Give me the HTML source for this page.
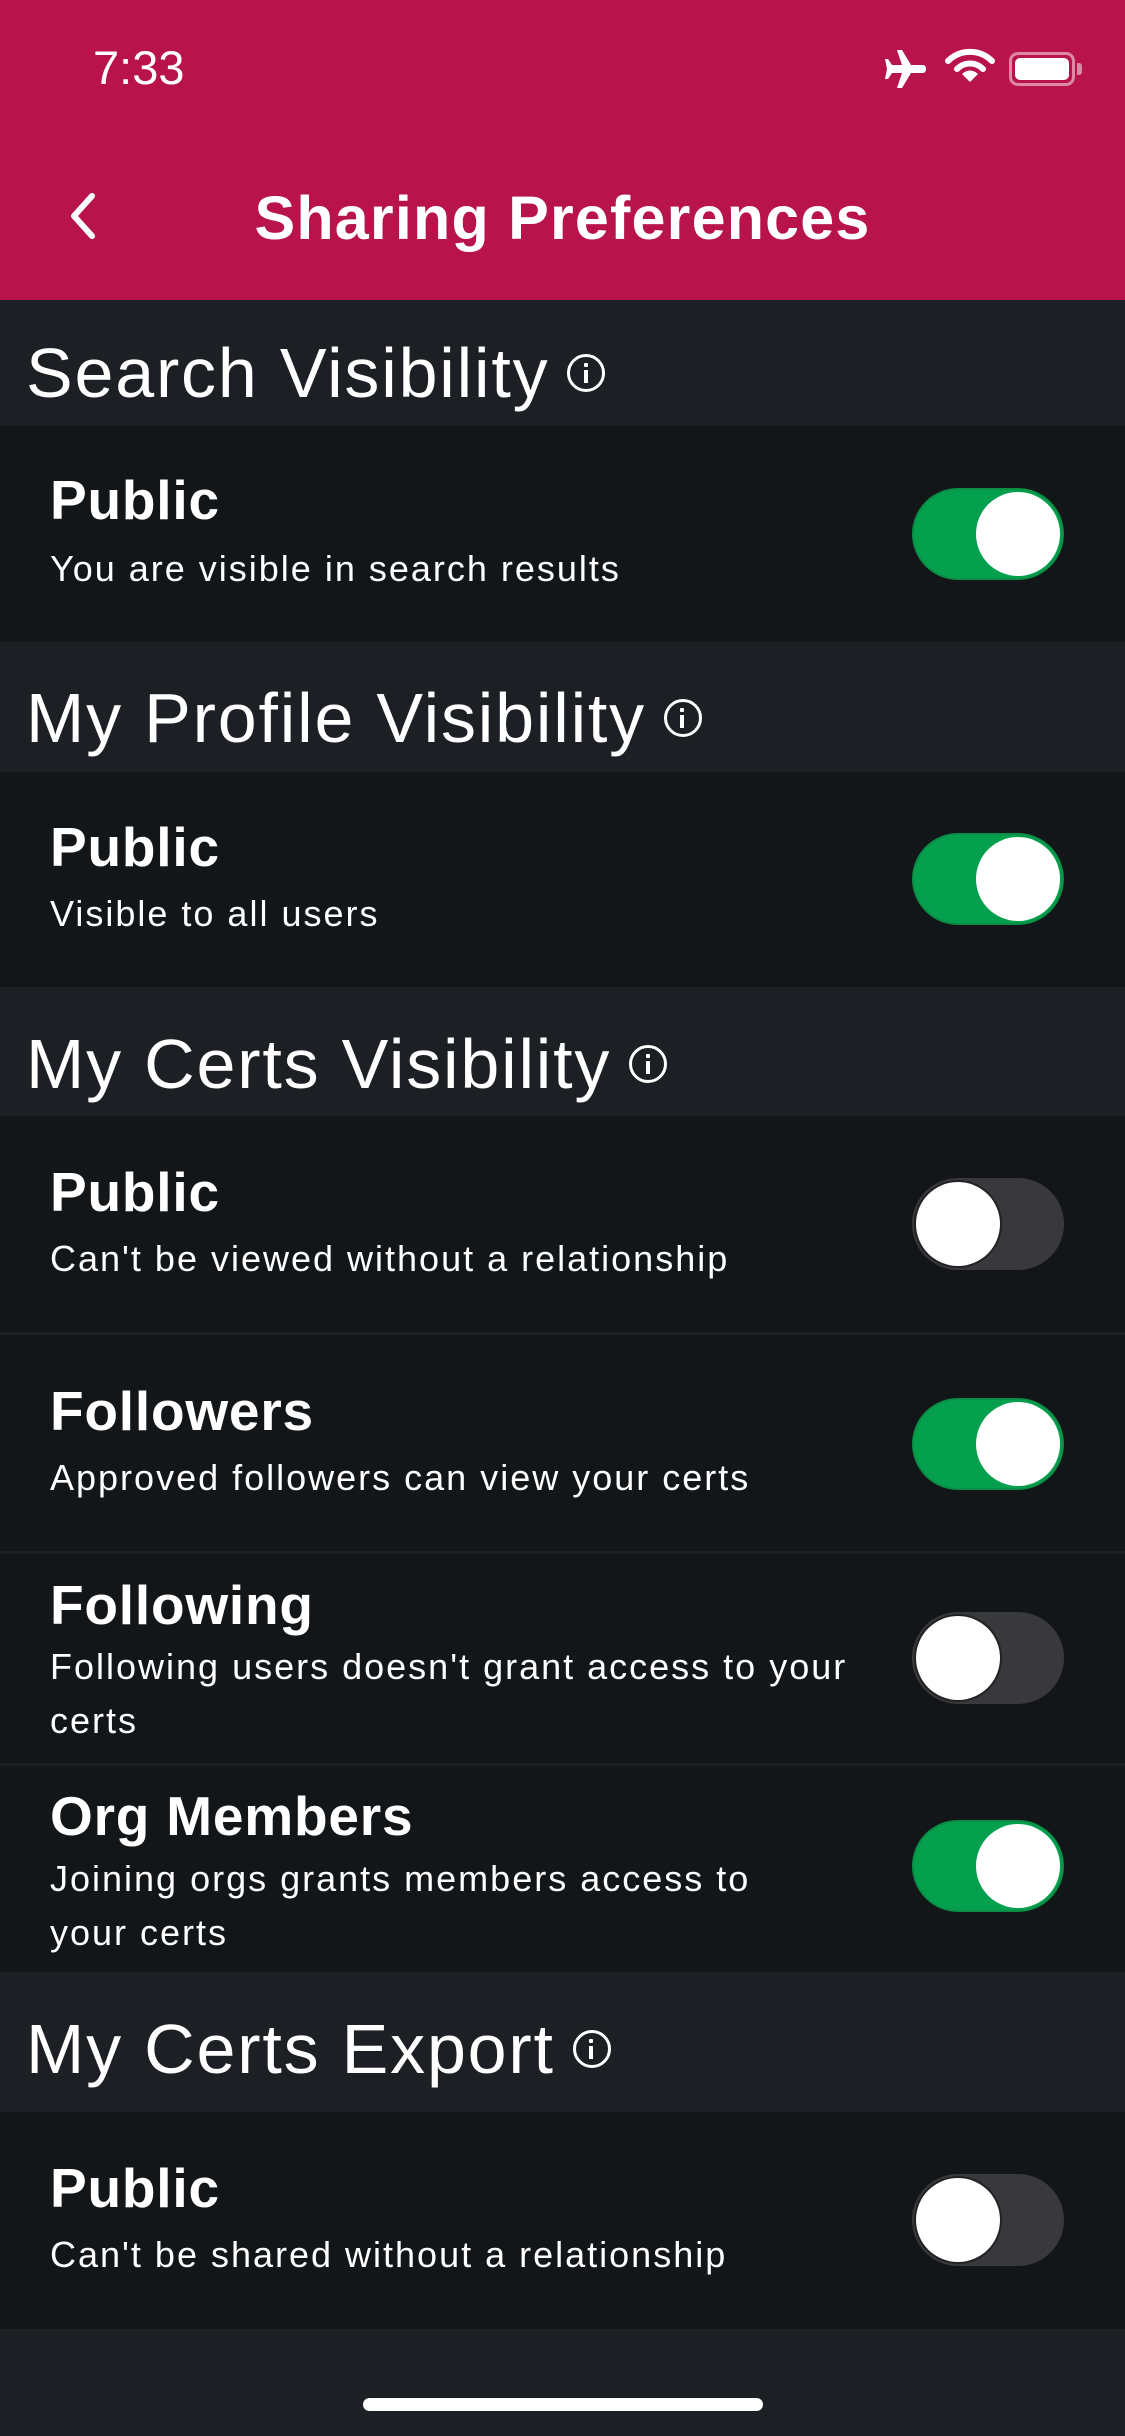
<!DOCTYPE html>
<html><head><meta charset="utf-8"><style>
*{margin:0;padding:0;box-sizing:border-box}
body{width:1125px;height:2436px;background:#1c1f23;position:relative;overflow:hidden;font-family:"Liberation Sans",sans-serif;color:#fff}
.abs{position:absolute}
.hdr{left:0;top:0;width:1125px;height:300px;background:#b8134a}
.row{left:0;width:1125px;background:#131619}
.sep{left:0;width:1125px;height:3px;background:#1c1f23}
.h{left:26px;font-size:70px;letter-spacing:1.8px;line-height:80px;white-space:nowrap;display:flex;align-items:center}
.h .i{display:inline-block;width:38px;height:38px;border:3.5px solid #fff;border-radius:50%;margin-left:18px;position:relative}
.h .i:before{content:"";position:absolute;left:13.5px;top:6px;width:4px;height:4px;background:#fff;border-radius:1px}
.h .i:after{content:"";position:absolute;left:13.5px;top:13px;width:4px;height:13px;background:#fff}
.t{left:50px;font-size:55px;font-weight:bold;letter-spacing:0.8px;line-height:60px;white-space:nowrap}
.s{left:50px;font-size:36px;letter-spacing:2px;line-height:54px;white-space:nowrap}
.tg{left:912px;width:152px;height:92px;border-radius:46px}
.tg.on{background:#05a04e;border:2px solid #0a8d45}
.tg.off{background:#38383d}
.tg .k{position:absolute;top:4px;width:84px;height:84px;border-radius:50%;background:#fff}
.tg.on .k{right:2px;top:2px}
.tg.off .k{left:4px;box-shadow:0 0 0 2px #222}
</style></head><body>
<div class="abs hdr"></div>
<div class="abs" style="left:93px;top:43px;font-size:47px;line-height:50px">7:33</div>
<svg class="abs" style="left:883px;top:48px" width="46" height="42" viewBox="0 0 46 42"><path d="M14 2 L19 2 L28 17 L40 17 C44 17 44 25 40 25 L28 25 L19 40 L14 40 L19 25 L9 25 L5 31 L2 31 L4 21 L2 11 L5 11 L9 17 L19 17 Z" fill="#fff"/></svg>
<svg class="abs" style="left:945px;top:48px" width="50" height="36" viewBox="0 0 50 36"><path d="M3 13 A31 31 0 0 1 47 13" stroke="#fff" stroke-width="6" fill="none" stroke-linecap="round"/><path d="M12 21 A18 18 0 0 1 38 21" stroke="#fff" stroke-width="6" fill="none" stroke-linecap="round"/><path d="M25 34 L17 26 A11 11 0 0 1 33 26 Z" fill="#fff"/></svg>
<div class="abs" style="left:1009px;top:52px;width:66px;height:34px;border:3px solid rgba(255,255,255,.5);border-radius:9px"></div>
<div class="abs" style="left:1015px;top:58px;width:54px;height:22px;background:#fff;border-radius:5px"></div>
<div class="abs" style="left:1077px;top:63px;width:5px;height:12px;background:rgba(255,255,255,.5);border-radius:0 3px 3px 0"></div>
<svg class="abs" style="left:66px;top:192px" width="34" height="48" viewBox="0 0 34 48"><path d="M26 4 L8 24 L26 44" stroke="#fff" stroke-width="6" fill="none" stroke-linecap="round" stroke-linejoin="round"/></svg>
<div class="abs" style="left:0;width:1125px;top:184px;text-align:center;font-size:61px;letter-spacing:1.2px;font-weight:bold;line-height:68px">Sharing Preferences</div>

<div class="abs h" style="top:333px">Search Visibility<span class="i"></span></div>
<div class="abs row" style="top:426px;height:216px"></div>
<div class="abs t" style="top:470px">Public</div>
<div class="abs s" style="top:542px">You are visible in search results</div>
<div class="abs tg on" style="top:488px"><div class="k"></div></div>

<div class="abs h" style="top:678px">My Profile Visibility<span class="i"></span></div>
<div class="abs row" style="top:772px;height:215px"></div>
<div class="abs t" style="top:817px">Public</div>
<div class="abs s" style="top:887px">Visible to all users</div>
<div class="abs tg on" style="top:833px"><div class="k"></div></div>

<div class="abs h" style="top:1024px">My Certs Visibility<span class="i"></span></div>
<div class="abs row" style="top:1116px;height:856px"></div>
<div class="abs t" style="top:1162px">Public</div>
<div class="abs s" style="top:1232px">Can't be viewed without a relationship</div>
<div class="abs tg off" style="top:1178px"><div class="k"></div></div>
<div class="abs sep" style="top:1332px"></div>
<div class="abs t" style="top:1381px">Followers</div>
<div class="abs s" style="top:1451px">Approved followers can view your certs</div>
<div class="abs tg on" style="top:1398px"><div class="k"></div></div>
<div class="abs sep" style="top:1551px"></div>
<div class="abs t" style="top:1575px">Following</div>
<div class="abs s" style="top:1640px">Following users doesn't grant access to your<br>certs</div>
<div class="abs tg off" style="top:1612px"><div class="k"></div></div>
<div class="abs sep" style="top:1763px"></div>
<div class="abs t" style="top:1786px">Org Members</div>
<div class="abs s" style="top:1852px">Joining orgs grants members access to<br>your certs</div>
<div class="abs tg on" style="top:1820px"><div class="k"></div></div>

<div class="abs h" style="top:2009px">My Certs Export<span class="i"></span></div>
<div class="abs row" style="top:2112px;height:217px"></div>
<div class="abs t" style="top:2158px">Public</div>
<div class="abs s" style="top:2228px">Can't be shared without a relationship</div>
<div class="abs tg off" style="top:2174px"><div class="k"></div></div>

<div class="abs" style="left:363px;top:2398px;width:400px;height:13px;border-radius:7px;background:#fff"></div>
</body></html>
